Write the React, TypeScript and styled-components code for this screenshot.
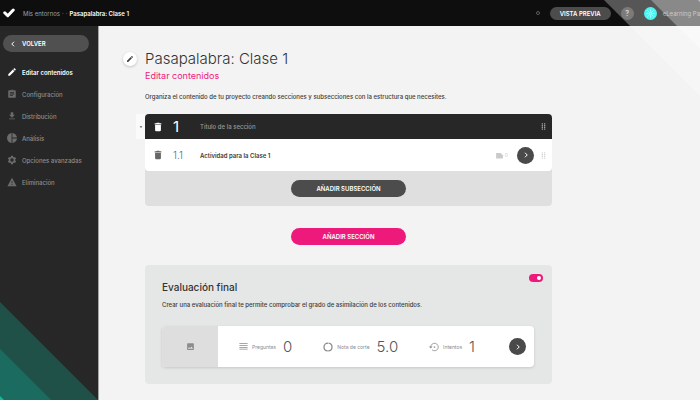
import React from "react";
import styled, { createGlobalStyle } from "styled-components";

const GlobalStyle = createGlobalStyle`
  *, *::before, *::after { box-sizing: border-box; }
  body { margin: 0; background: #f3f3f3; color: #3a3a3a; font-family: Inter, "Open Sans", sans-serif; overflow: hidden; }
  button, input { font-family: inherit; border: 0; padding: 0; margin: 0; }
  h1, h2, p, ul { margin: 0; padding: 0; }
  svg { display: block; flex: none; }
`;

const Page = styled.div`
  position: relative;
  display: flex;
  flex-direction: column;
  min-height: 100vh;
  overflow: hidden;
`;

const TopBar = styled.header`
  display: flex;
  align-items: center;
  height: 26px;
  padding-left: 3px;
  background: #0e0e0e;
  color: #a0a0a0;
  font-size: 6px;
  white-space: nowrap;
`;

const Crumbs = styled.nav`
  display: flex;
  align-items: center;
  gap: 2px;
  margin: 1px auto 0 8px;
`;

const CrumbLink = styled.a`
  color: #a0a0a0;
  text-decoration: none;
`;

const CrumbCurrent = styled.strong`
  color: #fff;
  font-weight: 600;
`;

const Account = styled.div`
  display: flex;
  align-items: center;
`;

const StatusDot = styled.span`
  width: 4px;
  height: 4px;
  margin-right: 10px;
  border: 1px solid #5c5c5c;
  border-radius: 50%;
`;

const Pill = styled.button<{ $tone?: "pink"; $compact?: boolean }>`
  display: flex;
  align-items: center;
  justify-content: center;
  width: ${(p) => (p.$compact ? "61px" : "115px")};
  height: ${(p) => (p.$compact ? "13px" : "17px")};
  border-radius: 9px;
  background: ${(p) => (p.$tone === "pink" ? "#ed1a7b" : "#4c4c4c")};
  color: #fff;
  font-size: 6px;
  font-weight: 600;
`;

const HelpButton = styled.button`
  width: 13px;
  height: 13px;
  margin-left: 10px;
  border-radius: 50%;
  background: #424242;
  color: #ccc;
  font-size: 7px;
  font-weight: 600;
  line-height: 13px;
`;

const Avatar = styled.span`
  display: flex;
  align-items: center;
  justify-content: center;
  width: 13px;
  height: 13px;
  margin: 0 6px 0 10px;
  border-radius: 50%;
  background: #00f0f0;
`;

const UserName = styled.span`
  color: #999;
`;

const Body = styled.div`
  display: flex;
  flex: 1;
`;

const Sidebar = styled.aside`
  flex: 0 0 99px;
  padding: 9px 9px 0 3px;
  border-right: 1px solid #a4a4a4;
  background: #272727;
`;

const BackButton = styled.button`
  display: flex;
  align-items: center;
  gap: 6px;
  width: 100%;
  height: 17px;
  padding-left: 7px;
  border-radius: 9px;
  background: #505050;
  color: #fff;
  font-size: 6px;
  font-weight: 600;
`;

const Menu = styled.ul`
  margin-top: 9px;
  list-style: none;
`;

const MenuLink = styled.a<{ $active?: boolean }>`
  display: flex;
  align-items: center;
  gap: 5px;
  height: 22px;
  padding-left: 4px;
  color: ${(p) => (p.$active ? "#fff" : "#8e8e8e")};
  font-size: 6px;
  font-weight: ${(p) => (p.$active ? 600 : 500)};
  text-decoration: none;
  white-space: nowrap;

  svg { color: ${(p) => (p.$active ? "#fff" : "#6b6b6b")}; }
`;

const Main = styled.main`
  display: grid;
  flex: 1;
  grid-template-columns: 22px minmax(0, 1fr);
  align-content: start;
  padding: 23px 148px 16px 24px;
`;

const EditBubble = styled.button`
  display: flex;
  align-items: center;
  justify-content: center;
  width: 14px;
  height: 14px;
  margin-top: 3px;
  border-radius: 50%;
  background: #fff;
  box-shadow: 0 1px 3px #0003;
  color: #444;
`;

const Content = styled.div`
  grid-column: 2;
`;

const Title = styled.h1`
  color: #333;
  font-size: 15px;
  font-weight: 300;
  line-height: 20px;
`;

const Subtitle = styled.h2`
  color: #ed1a7b;
  font-size: 9px;
  font-weight: 400;
  line-height: 14px;
`;

const Note = styled.p`
  font-size: 6px;
  font-weight: 500;
  line-height: 10px;
`;

const Intro = styled(Note)`
  margin: 9px 0 12px;
`;

const Collapse = styled.button`
  display: flex;
  align-items: center;
  justify-content: center;
  justify-self: end;
  width: 9px;
  height: 25px;
  background: #fafafa;
  color: #555;
`;

const Section = styled.section`
  overflow: hidden;
  border-radius: 4px;
  background: #dfdfdf;
`;

const Row = styled.div<{ $head?: boolean }>`
  display: flex;
  align-items: center;
  height: ${(p) => (p.$head ? "25px" : "32px")};
  padding: 0 5px 0 8px;
  border-radius: ${(p) => (p.$head ? "0" : "0 0 4px 4px")};
  background: ${(p) => (p.$head ? "#272727" : "#fff")};
  color: ${(p) => (p.$head ? "#fff" : "#666")};
`;

const IconButton = styled.button`
  display: flex;
  background: none;
  color: inherit;
`;

const Index = styled.span<{ $large?: boolean }>`
  width: 27px;
  margin-left: 10px;
  font-size: ${(p) => (p.$large ? "15px" : "10px")};
  font-weight: ${(p) => (p.$large ? 400 : 300)};
`;

const SectionName = styled.input`
  flex: 1;
  min-width: 0;
  background: none;
  color: #fff;
  font-size: 6px;
  font-weight: 500;
  outline: 0;

  &::placeholder { color: #9a9a9a; opacity: 1; }
`;

const ActivityName = styled.span`
  flex: 1;
  color: #3a3a3a;
  font-size: 6px;
  font-weight: 600;
`;

const Comments = styled.span`
  display: flex;
  align-items: center;
  gap: 1px;
  margin-right: 9px;
  color: #cacaca;
  font-size: 5px;
`;

const RoundButton = styled.button`
  display: flex;
  align-items: center;
  justify-content: center;
  flex: none;
  width: 17px;
  height: 17px;
  border-radius: 50%;
  background: #4a4a4a;
  color: #fff;
`;

const Handle = styled.span<{ $color: string }>`
  display: flex;
  margin-left: 6px;
  color: ${(p) => p.$color};
`;

const Centered = styled.div`
  display: flex;
  justify-content: center;
  padding: 9px 0;
`;

const AddSection = styled(Centered)`
  padding: 22px 0 20px;
`;

const Evaluation = styled.section`
  padding: 9px 9px 17px 17px;
  border-radius: 4px;
  background: #e5e7e6;
`;

const EvaluationHead = styled.div`
  display: flex;
  justify-content: space-between;
`;

const EvaluationTitle = styled.h2`
  margin-top: 6px;
  color: #333;
  font-size: 10px;
  font-weight: 500;
  line-height: 14px;
`;

const Toggle = styled.input`
  display: flex;
  align-items: center;
  justify-content: flex-end;
  width: 14px;
  height: 8px;
  padding-right: 2px;
  border-radius: 4px;
  background: #b5b5b5;
  appearance: none;

  &::before { content: ""; width: 4px; height: 4px; border-radius: 50%; background: #fff; }
  &:checked { background: #ed1a7b; }
`;

const EvaluationNote = styled(Note)`
  margin: 6px 0 16px;
`;

const Card = styled.div`
  display: flex;
  align-items: center;
  height: 41px;
  margin-right: 9px;
  padding-right: 8px;
  overflow: hidden;
  border-radius: 4px;
  background: #fff;
  box-shadow: 0 1px 3px #0002;
`;

const Thumbnail = styled.div`
  display: flex;
  align-items: center;
  justify-content: center;
  width: 56px;
  height: 100%;
  background: #dedede;
  color: #8c8c8c;
`;

const Stats = styled.div`
  display: flex;
  flex: 1;
  justify-content: space-between;
  padding: 0 34px 0 21px;
`;

const Stat = styled.div`
  display: flex;
  align-items: center;
  gap: 4px;
  color: #8a8a8a;
`;

const StatLabel = styled.span`
  font-size: 5px;
`;

const StatValue = styled.span`
  margin-left: 3px;
  color: #555;
  font-size: 15px;
  font-weight: 300;
`;

const Corner = styled.div<{ $size: number; $color: string; $place: "top" | "bottom" }>`
  position: absolute;
  ${(p) => (p.$place === "top" ? "top: 0; right: 0;" : "bottom: 0; left: 0;")}
  width: ${(p) => p.$size}px;
  height: ${(p) => p.$size}px;
  background: ${(p) => p.$color};
  clip-path: ${(p) => (p.$place === "top" ? "polygon(0 0, 100% 0, 100% 100%)" : "polygon(0 0, 100% 100%, 0 100%)")};
  pointer-events: none;
`;

const paths = {
  pencil: "M3 17.25V21h3.75L17.81 9.94l-3.75-3.75L3 17.25zM20.71 7.04a1 1 0 0 0 0-1.41l-2.34-2.34a1 1 0 0 0-1.41 0l-1.83 1.83 3.75 3.75 1.83-1.83z",
  clipboard: "M19 3h-4.18C14.4 1.84 13.3 1 12 1s-2.4.84-2.82 2H5a2 2 0 0 0-2 2v14a2 2 0 0 0 2 2h14a2 2 0 0 0 2-2V5a2 2 0 0 0-2-2zm-7 0a1 1 0 1 1 0 2 1 1 0 0 1 0-2zm2 14H7v-2h7v2zm3-4H7v-2h10v2zm0-4H7V7h10v2z",
  download: "M19 9h-4V3H9v6H5l7 7 7-7zM5 18v2h14v-2H5z",
  pie: "M11 0v24C4.900 23.500 0 18.300 0 12S4.900.5 11 0zm2 0v11h11C23.500 5.200 18.800.5 13 0zm0 13v11c5.800-.5 10.500-5.200 11-11H13z",
  gear: "M19.430 12.980c.04-.32.07-.64.07-.98s-.03-.66-.07-.98l2.110-1.650c.19-.15.24-.42.12-.64l-2-3.460c-.12-.22-.39-.3-.61-.22l-2.490 1c-.52-.4-1.080-.73-1.690-.98l-.38-2.650A.49.49 0 0 0 14 2h-4c-.25 0-.46.18-.49.42l-.38 2.650c-.61.25-1.170.59-1.690.98l-2.490-1c-.23-.09-.49 0-.61.22l-2 3.460c-.13.22-.07.49.12.64l2.110 1.650c-.04.32-.07.65-.07.98s.03.66.07.98l-2.110 1.650c-.19.15-.24.42-.12.64l2 3.460c.12.22.39.3.61.22l2.490-1c.52.4 1.080.73 1.690.98l.38 2.650c.03.24.24.42.49.42h4c.25 0 .46-.18.49-.42l.38-2.650c.61-.25 1.170-.59 1.690-.98l2.490 1c.23.09.49 0 .61-.22l2-3.460c.12-.22.07-.49-.12-.64l-2.110-1.650zM12 16a4 4 0 1 1 0-8 4 4 0 0 1 0 8z",
  warning: "M1 22h22L12 2 1 22zm12-3h-2v-2h2v2zm0-4h-2v-5h2v5z",
  trash: "M5 20a2 2 0 0 0 2 2h10a2 2 0 0 0 2-2V7H5v13zM20 3h-4l-1-1H9L8 3H4v3h16V3z",
  image: "M21 19V5a2 2 0 0 0-2-2H5a2 2 0 0 0-2 2v14a2 2 0 0 0 2 2h14a2 2 0 0 0 2-2zM8.500 13.500l2.500 3 3.500-4.500 4.500 6H5l3.500-4.500z",
  note: "M3 5h12l6 6v9H3V5z",
  lines: "M1 3h22v2H1zM1 8h22v2H1zM1 13h22v2H1zM1 18h22v2H1z",
  dots: "M6 1h4v4H6zM14 1h4v4h-4zM6 7h4v4H6zM14 7h4v4h-4zM6 13h4v4H6zM14 13h4v4h-4zM6 19h4v4H6zM14 19h4v4h-4z",
  caret: "M4 7h16l-8 11z",
};

function Icon({ name, size = 8 }: { name: keyof typeof paths; size?: number }) {
  return (
    <svg width={size} height={size} viewBox="0 0 24 24" fill="currentColor" aria-hidden="true">
      <path d={paths[name]} />
    </svg>
  );
}

function Chevron({ left }: { left?: boolean }) {
  return (
    <svg width="6" height="6" viewBox="0 0 12 12" fill="none" stroke="currentColor" strokeWidth="2" aria-hidden="true">
      <path d={left ? "M8 1.500L3.500 6 8 10.500" : "M4 1.500L8.500 6 4 10.500"} />
    </svg>
  );
}

function CutoffIcon() {
  return (
    <svg width="10" height="10" viewBox="0 0 20 20" fill="none" stroke="currentColor" strokeWidth="2.500" aria-hidden="true">
      <circle cx="10" cy="10" r="8" strokeDasharray="11.750 1 24.130 1 11.380 1" />
    </svg>
  );
}

function AttemptsIcon() {
  return (
    <svg width="10" height="10" viewBox="0 0 20 20" fill="none" stroke="currentColor" strokeWidth="1.600" aria-hidden="true">
      <path d="M3.500 10a7.500 7.500 0 1 1 2.500 5.600" />
      <path d="M0 9l3.500 4L7 9z" fill="currentColor" stroke="none" />
      <path d="M9.500 10h3" strokeWidth="2.500" />
    </svg>
  );
}

const menu: { icon: keyof typeof paths; label: string }[] = [
  { icon: "pencil", label: "Editar contenidos" },
  { icon: "clipboard", label: "Configuración" },
  { icon: "download", label: "Distribución" },
  { icon: "pie", label: "Análisis" },
  { icon: "gear", label: "Opciones avanzadas" },
  { icon: "warning", label: "Eliminación" },
];

const stats = [
  { icon: <Icon name="lines" size={9} />, label: "Preguntas", value: "0" },
  { icon: <CutoffIcon />, label: "Nota de corte", value: "5.0" },
  { icon: <AttemptsIcon />, label: "Intentos", value: "1" },
];

export default function App() {
  return (
    <Page>
      <GlobalStyle />
      <TopBar>
        <svg width="12" height="10" viewBox="0 0 24 20" aria-label="Inicio">
          <path d="M3.500 9.500l6 6L20.500 4" fill="none" stroke="#fff" strokeWidth="6" strokeLinejoin="round" strokeLinecap="round" />
        </svg>
        <Crumbs aria-label="Ruta">
          <CrumbLink href="#entornos">Mis entornos</CrumbLink>
          <span>·</span>
          <span>·</span>
          <CrumbCurrent>Pasapalabra: Clase 1</CrumbCurrent>
        </Crumbs>
        <Account>
          <StatusDot />
          <Pill $compact>VISTA PREVIA</Pill>
          <HelpButton aria-label="Ayuda">?</HelpButton>
          <Avatar>
            <svg width="9" height="9" viewBox="0 0 18 18" fill="none" stroke="#b8ffff" strokeWidth="1.500" aria-hidden="true">
              <circle cx="9" cy="9" r="2.500" />
              <path d="M9 1v4M9 13v4M1 9h4M13 9h4M3 3l3 3M12 12l3 3M15 3l-3 3M6 12l-3 3" />
            </svg>
          </Avatar>
          <UserName>eLearning Pa</UserName>
        </Account>
      </TopBar>
      <Body>
        <Sidebar>
          <BackButton>
            <Chevron left />
            VOLVER
          </BackButton>
          <Menu>
            {menu.map((item, i) => (
              <li key={item.label}>
                <MenuLink href={`#${item.icon}`} $active={i === 0}>
                  <Icon name={item.icon} size={10} />
                  {item.label}
                </MenuLink>
              </li>
            ))}
          </Menu>
        </Sidebar>
        <Main>
          <EditBubble aria-label="Editar título">
            <Icon name="pencil" size={8} />
          </EditBubble>
          <Title>Pasapalabra: Clase 1</Title>
          <Content>
            <Subtitle>Editar contenidos</Subtitle>
            <Intro>Organiza el contenido de tu proyecto creando secciones y subsecciones con la estructura que necesites.</Intro>
          </Content>
          <Collapse aria-label="Contraer sección">
            <Icon name="caret" size={4} />
          </Collapse>
          <Section>
            <Row $head>
              <IconButton aria-label="Eliminar sección">
                <Icon name="trash" size={10} />
              </IconButton>
              <Index $large>1</Index>
              <SectionName aria-label="Título de la sección" placeholder="Título de la sección" />
              <Handle $color="#aaa">
                <Icon name="dots" size={7} />
              </Handle>
            </Row>
            <Row>
              <IconButton aria-label="Eliminar actividad">
                <Icon name="trash" size={10} />
              </IconButton>
              <Index>1.1</Index>
              <ActivityName>Actividad para la Clase 1</ActivityName>
              <Comments>
                <Icon name="note" size={9} />0
              </Comments>
              <RoundButton aria-label="Abrir actividad">
                <Chevron />
              </RoundButton>
              <Handle $color="#d4d4d4">
                <Icon name="dots" size={7} />
              </Handle>
            </Row>
            <Centered>
              <Pill>AÑADIR SUBSECCIÓN</Pill>
            </Centered>
          </Section>
          <Content>
            <AddSection>
              <Pill $tone="pink">AÑADIR SECCIÓN</Pill>
            </AddSection>
            <Evaluation>
              <EvaluationHead>
                <EvaluationTitle>Evaluación final</EvaluationTitle>
                <Toggle type="checkbox" defaultChecked aria-label="Evaluación final" />
              </EvaluationHead>
              <EvaluationNote>
                Crear una evaluación final te permite comprobar el grado de asimilación de los contenidos.
              </EvaluationNote>
              <Card>
                <Thumbnail>
                  <Icon name="image" size={9} />
                </Thumbnail>
                <Stats>
                  {stats.map((s) => (
                    <Stat key={s.label}>
                      {s.icon}
                      <StatLabel>{s.label}</StatLabel>
                      <StatValue>{s.value}</StatValue>
                    </Stat>
                  ))}
                </Stats>
                <RoundButton aria-label="Abrir evaluación">
                  <Chevron />
                </RoundButton>
              </Card>
            </Evaluation>
          </Content>
        </Main>
      </Body>
      <Corner $place="top" $size={96} $color="#ffffff4d" />
      <Corner $place="top" $size={49} $color="#ffffff4d" />
      <Corner $place="top" $size={2} $color="#ffffff80" />
      <Corner $place="bottom" $size={98} $color="#1f5148" />
      <Corner $place="bottom" $size={51} $color="#1c6b60" />
      <Corner $place="bottom" $size={4} $color="#12b89a" />
    </Page>
  );
}
